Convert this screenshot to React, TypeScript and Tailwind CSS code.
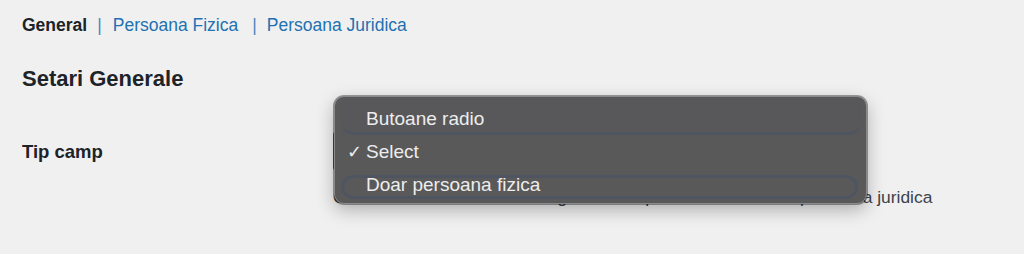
const options = ['Butoane radio', 'Select', 'Doar persoana fizica'];

function Nav() {
  return (
    <ul className="flex items-center text-[17.5px] leading-none">
      <li className="font-bold text-[#1d2327]">General</li>
      <li className="ml-[10px] mr-[11px] text-[#4f86bd]">|</li>
      <li className="text-[#2271b1]">Persoana Fizica</li>
      <li className="ml-[14px] mr-[10px] text-[#4f86bd]">|</li>
      <li className="text-[#2271b1]">Persoana Juridica</li>
    </ul>
  );
}

function SelectMenu() {
  return (
    <div className="absolute left-px top-[-35px] w-[533px] h-[108px] rounded-[10px] bg-[#59595a] border border-[#8a8a8c] shadow-[0_6px_18px_rgba(0,0,0,0.28),0_0_0_1px_rgba(0,0,0,0.35)] overflow-hidden">
      {/* blurred shapes from the page underneath */}
      <div className="absolute left-[6px] right-[4px] top-[2px] h-[36px] rounded-[14px] border-b-[3px] border-[#4c5463] opacity-70" />
      <div className="absolute left-[6px] right-[8px] top-[78px] h-[24px] rounded-[12px] border-[3px] border-[#4c5463] opacity-70" />
      <div className="relative pt-[6px] pb-[3px]">
        {options.map((opt) => (
          <div key={opt} className="h-[33px] flex items-center text-[19px] text-[#ededed]">
            <span className="w-[31px] pl-[12px] text-[18px]">{opt === 'Select' ? '✓' : ''}</span>
            <span>{opt}</span>
          </div>
        ))}
      </div>
    </div>
  );
}

export default function App() {
  return (
    <div className="w-[1024px] h-[254px] bg-[#f0f0f1] overflow-hidden px-[22px] pt-[17px] font-['Liberation_Sans',Arial,sans-serif]">
      <Nav />
      <h2 className="mt-[33px] text-[22px] leading-none font-bold text-[#1d2327]">Setari Generale</h2>
      <div className="mt-[41px] flex">
        <div className="w-[311px] pt-[12px] text-[18.5px] leading-none font-bold text-[#1d2327]">Tip camp</div>
        <div className="relative">
          <div className="w-[528px] h-[40px] rounded-[4px] border border-[#8c8f94] border-l-[#2271b1] bg-white" />
          <p className="mt-[18px] text-[17.4px] leading-none text-[#3c434a] whitespace-nowrap">
            Cum doresti sa fie afisata alegerea intre persoana fizica sau persoana juridica
          </p>
          <SelectMenu />
        </div>
      </div>
    </div>
  );
}
